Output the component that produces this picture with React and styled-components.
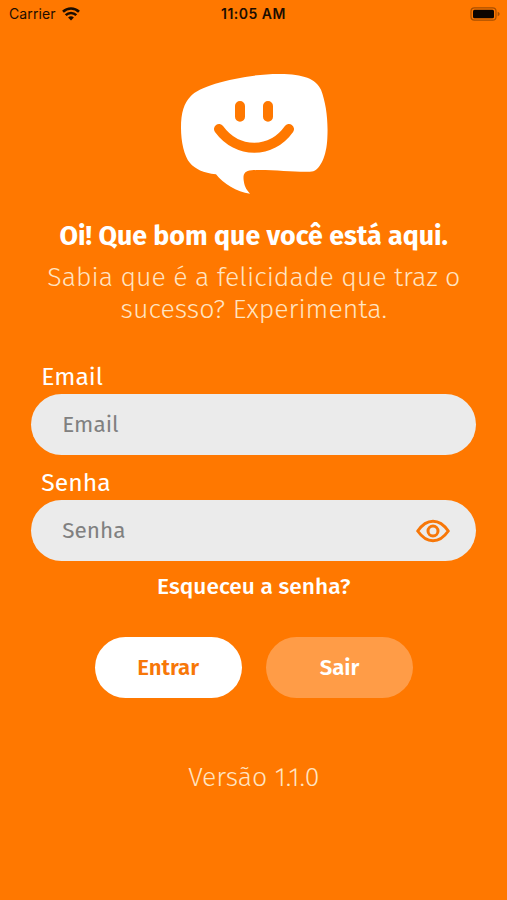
import React, { useState } from "react"
import styled, { createGlobalStyle } from "styled-components"

const GlobalStyle = createGlobalStyle`
  * {
    box-sizing: border-box;
  }

  body {
    margin: 0;
    background-color: #ff7800;
  }
`

const Container = styled.div`
  display: flex;
  flex-direction: column;
  height: 900px;
  width: 507px;
  overflow: hidden;
  background-color: #ff7800;
  color: #fff;
  font-family: "Fira Sans", "Noto Sans", sans-serif;
`

const StatusBar = styled.header`
  display: grid;
  grid-template-columns: 1fr auto 1fr;
  align-items: center;
  height: 27px;
  padding: 0 9px;
  color: #1c0d00;
  font-family: Inter, sans-serif;
  font-size: 14px;
`

const Carrier = styled.div`
  display: flex;
  align-items: center;
  gap: 6px;
  letter-spacing: 0.1px;
`

const Clock = styled.div`
  font-weight: 600;
  letter-spacing: 0.5px;
`

const Battery = styled.svg`
  justify-self: end;
  margin-right: -3px;
`

const Content = styled.main`
  display: flex;
  flex-direction: column;
  align-items: center;
  padding: 46px 30.7px 0 31.3px;
`

const Logo = styled.svg`
  display: block;
  width: 148px;
  height: 122px;
`

const Title = styled.h1`
  margin: 23px 0 0;
  font-size: 26.8px;
  font-weight: 700;
  line-height: 36px;
  white-space: nowrap;
`

const Subtitle = styled.p`
  margin: 7px 0 0;
  color: #ffe4c2;
  font-size: 26.7px;
  font-weight: 300;
  line-height: 32px;
  text-align: center;
  white-space: nowrap;
`

const Line = styled.span`
  display: block;
`

const Form = styled.form`
  display: flex;
  flex-direction: column;
  width: 100%;
  margin-top: 35px;
`

const Label = styled.label`
  height: 34px;
  padding-left: 10px;
  font-size: 24.7px;
  line-height: 34px;
`

const Field = styled.div`
  display: flex;
  align-items: center;
  height: 61px;
  margin-bottom: 10.5px;
  padding: 0 26px 0 31px;
  border-radius: 31px;
  background-color: #ebebeb;
`

const Input = styled.input`
  flex: 1;
  min-width: 0;
  padding: 0;
  border: none;
  outline: none;
  background: transparent;
  color: #444;
  font-family: inherit;
  font-size: 22.5px;

  &::placeholder {
    color: #808080;
    opacity: 1;
  }
`

const EyeButton = styled.button`
  display: flex;
  padding: 1px 0 0;
  border: none;
  background: none;
  cursor: pointer;
`

const Forgot = styled.a`
  align-self: center;
  margin-top: 1px;
  font-size: 22.7px;
  font-weight: 500;
  line-height: 30px;
`

const Actions = styled.div`
  display: flex;
  justify-content: center;
  gap: 24.4px;
  margin-top: 34.8px;
`

const Button = styled.button`
  width: 147px;
  height: 61px;
  padding: 0;
  border: none;
  border-radius: 31px;
  background-color: ${(props) => (props.$ghost ? "#ff9c47" : "#fff")};
  color: ${(props) => (props.$ghost ? "#fff" : "#f77708")};
  font-family: inherit;
  font-size: 22.2px;
  font-weight: 600;
  cursor: pointer;
`

const Version = styled.p`
  margin: 61px 0 0;
  color: #ffe4c2;
  font-size: 26.6px;
  font-weight: 300;
  line-height: 36px;
`

const WifiIcon = () => (
  <svg width="18" height="14" viewBox="0 0 18 14" fill="none" stroke="#1c0d00" strokeWidth="2.6">
    <path d="M1 4.7C5.4.4 12.6.4 17 4.7" />
    <path d="M3.7 8.1C6.7 5.2 11.3 5.2 14.3 8.1" />
    <path d="M6.1 10.4C7.8 8.9 10.2 8.9 11.9 10.4L9 13.4Z" fill="#1c0d00" stroke="none" />
  </svg>
)

const BatteryIcon = () => (
  <Battery width="31" height="14" viewBox="0 0 31 14">
    <rect x="1" y=".8" width="25" height="12.4" rx="3.4" fill="none" stroke="#a84f00" strokeWidth="1.2" />
    <rect x="3" y="2.7" width="21" height="8.6" rx="1.5" fill="#0d0500" />
    <path d="M27.7 4.8C30.3 5.7 30.3 8.3 27.7 9.2Z" fill="#a84f00" />
  </Battery>
)

const LogoIcon = () => (
  <Logo viewBox="30 40 444 366">
    <path
      d="M62 110C90 75 230 42 330 43C400 43 438 58 453 90C468 130 475 180 472 235C470 290 450 328 430 335C400 341 300 328 245 332C222 334 219 345 221 362C224 385 232 393 240 402C200 397 160 372 138 344C100 340 75 328 60 310C42 290 33 245 33 205C33 160 42 130 62 110Z"
      fill="#fff"
    />
    <g fill="none" stroke="#ff7800" strokeWidth="30" strokeLinecap="round">
      <path d="M210 139V171M294 139V171" />
      <path d="M147 208C202 283 304 283 357 208" />
    </g>
  </Logo>
)

const EyeIcon = () => (
  <svg width="34" height="24" viewBox="0 0 34 24" fill="none" stroke="#f77708" strokeWidth="3" strokeLinejoin="round">
    <path d="M1.7 12C4.5 8 9.5 2.2 17 2.2C24.5 2.2 29.5 8 32.3 12C29.5 16 24.5 21.8 17 21.8C9.5 21.8 4.5 16 1.7 12Z" />
    <circle cx="17" cy="12" r="5" />
  </svg>
)

const App = () => {
  const [email, setEmail] = useState("")
  const [password, setPassword] = useState("")
  const [visible, setVisible] = useState(false)

  const handleSubmit = (e) => {
    e.preventDefault()
  }

  return (
    <Container>
      <GlobalStyle />
      <StatusBar>
        <Carrier>
          Carrier
          <WifiIcon />
        </Carrier>
        <Clock>11:05 AM</Clock>
        <BatteryIcon />
      </StatusBar>
      <Content>
        <LogoIcon />
        <Title>Oi! Que bom que você está aqui.</Title>
        <Subtitle>
          <Line>Sabia que é a felicidade que traz o</Line>
          <Line>sucesso? Experimenta.</Line>
        </Subtitle>
        <Form onSubmit={handleSubmit}>
          <Label htmlFor="email">Email</Label>
          <Field>
            <Input
              id="email"
              type="text"
              placeholder="Email"
              value={email}
              onChange={(e) => setEmail(e.target.value)}
            />
          </Field>
          <Label htmlFor="password">Senha</Label>
          <Field>
            <Input
              id="password"
              type={visible ? "text" : "password"}
              placeholder="Senha"
              value={password}
              onChange={(e) => setPassword(e.target.value)}
            />
            <EyeButton type="button" onClick={() => setVisible(!visible)}>
              <EyeIcon />
            </EyeButton>
          </Field>
          <Forgot>Esqueceu a senha?</Forgot>
          <Actions>
            <Button type="submit">Entrar</Button>
            <Button type="button" $ghost>
              Sair
            </Button>
          </Actions>
        </Form>
        <Version>Versão 1.1.0</Version>
      </Content>
    </Container>
  )
}

export default App
